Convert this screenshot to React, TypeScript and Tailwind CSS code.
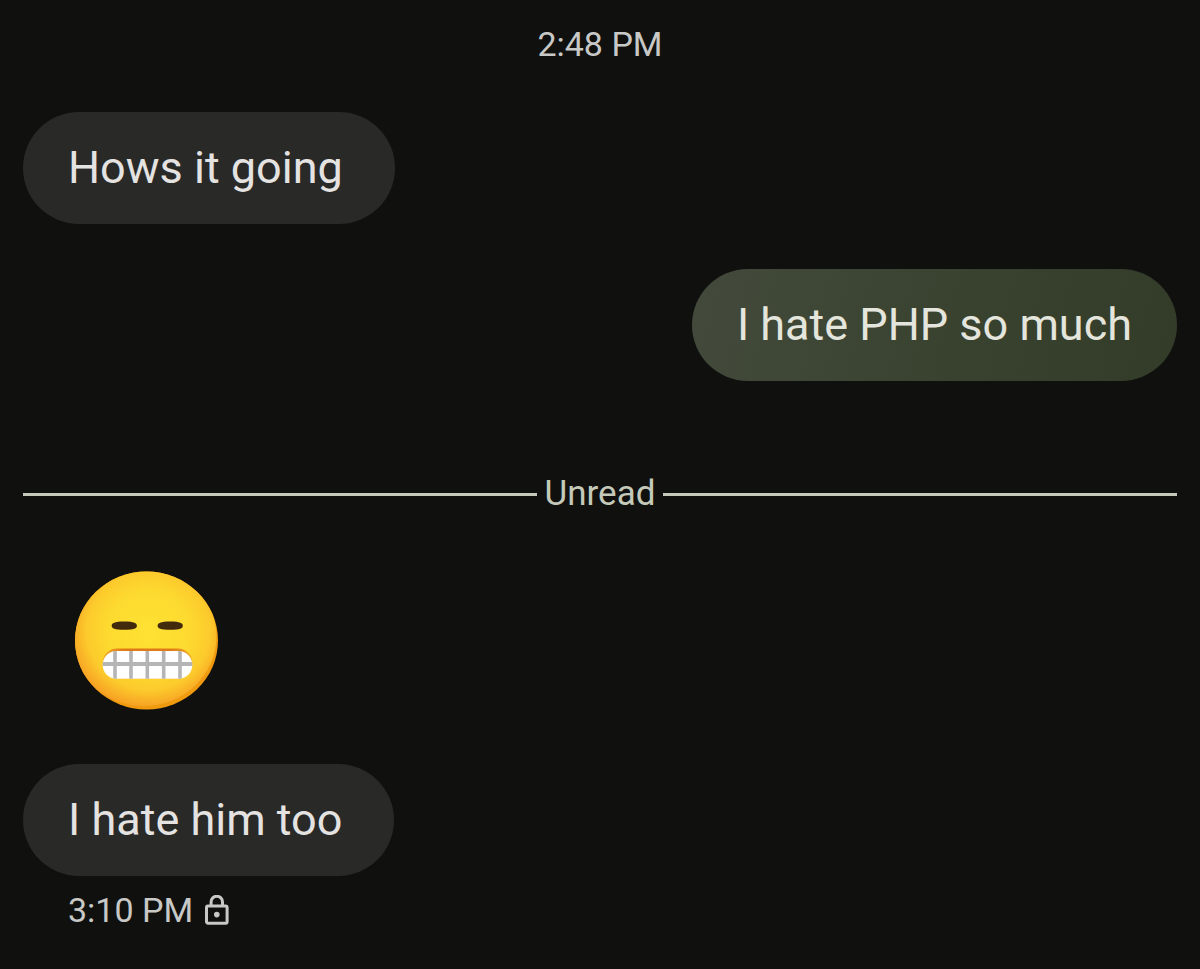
import React from "react";
import clsx from "clsx";

function LockIcon() {
  return (
    <svg
      width="24"
      height="30"
      viewBox="0 0 24 30"
      fill="none"
      stroke="#c8c8c6"
      strokeWidth="3"
      role="img"
      aria-label="Encrypted"
    >
      <rect x="1.5" y="11" width="20.6" height="17.2" rx="1.4" />
      <path d="M6.1 11V6.9a5.7 5.7 0 0 1 11.4 0V11" />
      <circle cx="11.8" cy="19.6" r="2.8" fill="#c8c8c6" stroke="none" />
    </svg>
  );
}

function GrimaceFace() {
  const eyes = [49.3, 95.2];
  const gaps = [40, 56, 72.3, 88.7, 105];

  return (
    <svg
      width="144"
      height="140"
      viewBox="0 0 144 140"
      role="img"
      aria-label="Grimacing face"
    >
      <defs>
        <radialGradient id="skin" cx="0.53" cy="0.46" r="0.57">
          <stop offset="0" stopColor="#fee232" />
          <stop offset="0.5" stopColor="#fdda2f" />
          <stop offset="0.75" stopColor="#fcca2c" />
          <stop offset="1" stopColor="#f69a22" />
        </radialGradient>
        <linearGradient id="lip" x1="0" y1="0" x2="1" y2="0">
          <stop offset="0" stopColor="#eda51f" />
          <stop offset="0.25" stopColor="#df7a18" />
          <stop offset="0.75" stopColor="#df7a18" />
          <stop offset="1" stopColor="#eda51f" />
        </linearGradient>
        <clipPath id="face">
          <ellipse cx="71.5" cy="69.5" rx="71.5" ry="69" />
        </clipPath>
        <clipPath id="teeth">
          <rect x="27.7" y="80" width="89.6" height="27.7" rx="13.8" />
        </clipPath>
      </defs>
      <g clipPath="url(#face)">
        <rect width="144" height="140" fill="#f09a10" />
        <ellipse cx="69" cy="65.5" rx="72.5" ry="69.5" fill="url(#skin)" />
      </g>
      {eyes.map((x) => (
        <path
          key={x}
          d={`M${x - 12.6} 54.8c0-2.6 2.6-4.2 12.6-4.2s12.6 1.6 12.6 4.2-2.6 4-12.6 4-12.6-1.4-12.6-4z`}
          fill="#422b0d"
        />
      ))}
      <rect x="27.7" y="77.5" width="89.6" height="30" rx="14.6" fill="url(#lip)" />
      <g clipPath="url(#teeth)">
        <rect x="27" y="79" width="91" height="29" fill="#ffffff" />
        <rect x="27" y="91" width="91" height="4" fill="#b5b5b5" />
        {gaps.map((x) => (
          <rect key={x} x={x - 1.8} y="79" width="3.6" height="29" fill="#b5b5b5" />
        ))}
      </g>
    </svg>
  );
}

function Bubble({ text, mine = false }: { text: string; mine?: boolean }) {
  return (
    <p
      className={clsx(
        "rounded-[56px] py-6 text-[45px] leading-[64px]",
        mine
          ? "self-end bg-linear-[105deg] from-[#434a3c] via-[#3a4330] to-[#333b29] px-[45px] text-[#e4e5dd]"
          : "self-start bg-[#292928] pr-[52px] pl-[45px] text-[#e5e3e1]"
      )}
    >
      {text}
    </p>
  );
}

export default function App() {
  return (
    <main className="flex min-h-screen flex-col bg-[#10110f] px-[23px] pt-5 pb-9 font-['Roboto',sans-serif]">
      <time className="text-center text-[34px] leading-12 text-[#c8c8c6]">
        2:48 PM
      </time>

      <div className="mt-11 flex flex-col gap-[45px]">
        <Bubble text="Hows it going" />
        <Bubble text="I hate PHP so much" mine />
      </div>

      <div className="mt-[89px] flex items-center gap-2 text-[35px] leading-12 text-[#c4c9b9]">
        <span className="h-[3px] flex-1 bg-[#c4c9b9]" />
        <span>Unread</span>
        <span className="h-[3px] flex-1 bg-[#c4c9b9]" />
      </div>

      <div className="mt-[53px] mb-[53px] pl-[52px]">
        <GrimaceFace />
      </div>

      <Bubble text="I hate him too" />

      <div className="mt-[10px] flex items-center gap-3 pl-[45px] text-[#c8c8c6]">
        <time className="text-[34px] leading-12">3:10 PM</time>
        <LockIcon />
      </div>
    </main>
  );
}
